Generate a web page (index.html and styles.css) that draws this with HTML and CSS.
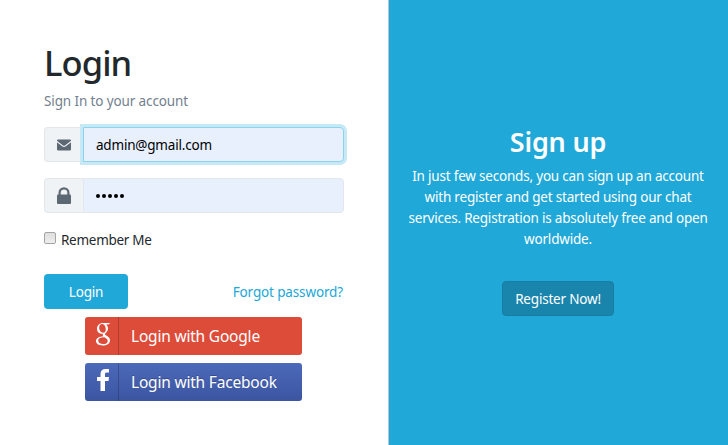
FILE: index.html
```
<!DOCTYPE html>
<html lang="en">
<head>
<meta charset="utf-8">
<title>Login</title>
<link rel="stylesheet" href="styles.css">
</head>
<body>
<main class="card-group">
  <section class="login">
    <h1><span>Login</span></h1>
    <p class="lead"><span>Sign In to your account</span></p>
    <div class="input-group focused">
      <span class="addon"><svg width="14" height="12" viewBox="0 0 14 12"><path fill="currentColor" d="M1.200 .5h11.600q1.200 0 1.200 1.200L8.300 6.300Q7 7.300 5.700 6.300L0 1.700Q0 .5 1.200 .5zM0 3.200l5.100 4.100q1.900 1.300 3.800 0L14 3.200v7q0 1.300-1.200 1.300H1.200Q0 11.500 0 10.200z"/></svg></span>
      <div class="field"><span class="email">admin@gmail.com</span></div>
    </div>
    <div class="input-group">
      <span class="addon"><svg width="14" height="18" viewBox="0 0 14 18"><path fill="none" stroke="currentColor" stroke-width="2.200" d="M2.600 9V5.700a4.400 4.400 0 0 1 8.800 0V9"/><rect y="7.500" width="14" height="9.500" rx="1" fill="currentColor"/></svg></span>
      <div class="field"><span class="dots"><i></i><i></i><i></i><i></i><i></i></span></div>
    </div>
    <label class="remember"><span class="box"></span><span class="remember-text">Remember Me</span></label>
    <div class="actions">
      <button class="btn primary"><span>Login</span></button>
      <a class="forgot">Forgot password?</a>
    </div>
    <div class="social">
      <button class="social-btn google"><span class="brand"><svg width="16" height="24" viewBox="0 0 16 24"><path fill="#fff" fill-rule="evenodd" d="M8 1h7.500l-2.300 1.600h-2.300c1.400 1 2.100 2.400 2.100 4 0 2-1 3.300-2.300 4.300-1.200 1-.8 1.800.6 2.700l1.500 1c1.500 1.100 2.200 2.200 2.200 3.800 0 3-3 5.100-7.400 5.100-4.100 0-6.600-1.800-6.600-4.400 0-3 3-4.700 7.500-4.900-.8-.8-1-1.500-.6-2.500C4.300 12 2 9.900 2 6.700 2 3.300 4.700 1 8 1zM7.200 2C5.300 2 4.200 3.400 4.200 5.500c0 2.700 1.500 5.200 3.800 5.200 1.800 0 2.800-1.300 2.800-3.300C10.800 4.800 9.500 2 7.200 2zM9.400 15.200c-4 0-6.200 1.100-6.200 3.400 0 2 1.900 3.400 5 3.400 2.900 0 4.500-1.200 4.500-3.100 0-1.600-1-2.300-3.300-3.700z"/></svg></span><span class="social-text google-text">Login with Google</span></button>
      <button class="social-btn facebook"><span class="brand"><svg width="12" height="22" viewBox="0 0 12 22"><path fill="#fff" d="M12 0v3.500H9.800C8.100 3.500 8 4.300 8 5.500V8h4l-.5 4H8v10H3.500V12H0V8h3.500V5C3.500 1.700 5.500 0 8.700 0z"/></svg></span><span class="social-text facebook-text">Login with Facebook</span></button>
    </div>
  </section>
  <section class="signup">
    <h2><span>Sign up</span></h2>
    <p class="pitch"><span class="l1">In just few seconds, you can sign up an account</span><span class="l2">with register and get started using our chat</span><span class="l3">services. Registration is absolutely free and open</span><span class="l4">worldwide.</span></p>
    <button class="btn register"><span>Register Now!</span></button>
  </section>
</main>
</body>
</html>
```
FILE: styles.css
```
* { box-sizing: border-box; }
body { margin: 0; background: #fff; color: #23282c; font: 13.5px/21px "Noto Sans", "Open Sans", sans-serif; letter-spacing: -0.2px; }
button { font: inherit; letter-spacing: inherit; padding: 0; margin: 0; color: #fff; }
h1, h2, p { margin: 0; white-space: nowrap; }
svg { display: block; }
.card-group { display: flex; height: 445px; }
.login { width: 389px; padding: 42px 44px 0; border-right: 1px solid #b9c3cb; }
h1 { height: 42px; margin-bottom: 7px; font-size: 34.5px; line-height: 42px; font-weight: 500; letter-spacing: -0.9px; }
.lead { height: 21px; margin-bottom: 15px; color: #73818f; letter-spacing: -0.12px; }
.input-group { display: flex; width: 300px; height: 35px; margin-bottom: 16px; }
.addon { display: flex; align-items: center; justify-content: center; width: 39px; color: #5c6873; background: #f0f3f5; border: 1px solid #e4e7ea; border-right: 0; border-radius: 4px 0 0 4px; }
.field { display: flex; align-items: center; width: 261px; padding-left: 12px; color: #000; background: #e8f0fe; border: 1px solid #e4e7ea; border-radius: 0 4px 4px 0; }
.email { padding-top: 2px; }
.focused .field { border-color: #8ad4ee; box-shadow: 0 0 0 3px #c7e9f6; }
.dots { display: flex; gap: 2px; }
.dots i { width: 4px; height: 4px; border-radius: 2px; background: #000; }
.remember { display: flex; align-items: center; height: 21px; margin-bottom: 24px; letter-spacing: -0.28px; }
.remember-text { padding-top: 2px; }
.box { width: 12px; height: 12px; margin: -4px 5px 0 0; border: 1px solid #a5a5a5; border-radius: 2px; background: linear-gradient(#dedede, #eee); }
.actions { display: flex; align-items: center; justify-content: space-between; width: 299px; height: 35px; margin-bottom: 8px; }
.btn { height: 35px; padding-top: 2px; border-radius: 4px; border: 0; }
.primary { width: 84px; background: #20a8d8; }
.forgot { padding-top: 2px; color: #20a8d8; letter-spacing: -0.14px; }
.social { display: flex; flex-direction: column; gap: 8px; width: 217px; margin-left: 41px; }
.social-btn { display: flex; align-items: center; height: 38px; border: 0; border-radius: 3px; font-size: 15.5px; text-align: left; white-space: nowrap; }
.brand { display: flex; align-items: center; justify-content: center; width: 34px; height: 38px; margin-right: 12px; padding: 0 0 4px 2px; border-right: 1px solid rgba(0,0,0,.2); }
.google { background: #dd4b39; }
.facebook { background: linear-gradient(#4c69ba, #3b55a0); }
.facebook-text { text-shadow: 0 -1px 0 #354c8c; }
.signup { display: flex; flex-direction: column; align-items: center; width: 339px; padding: 125px 1px 0 0; color: #fff; background: #20a8d8; }
h2 { height: 34px; margin-bottom: 7px; font-size: 27px; line-height: 34px; font-weight: 600; }
.pitch { margin-bottom: 31px; text-align: center; }
.pitch span { display: block; }
.register { width: 112px; background: #1985ac; border: 1px solid #187da0; }
```
